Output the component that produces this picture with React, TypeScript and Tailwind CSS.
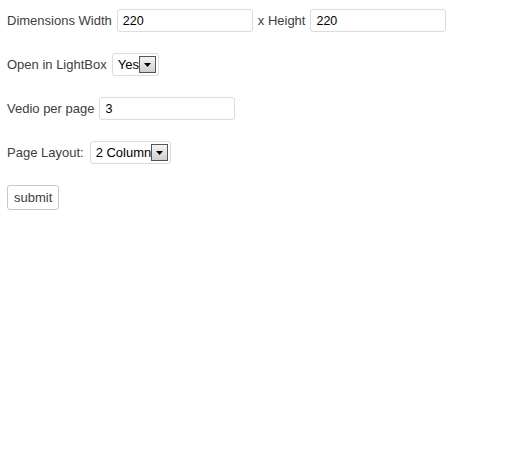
import React from 'react';

const Arrow = () => (
  <span className="flex h-[17px] w-[17px] shrink-0 items-center justify-center border border-[#555] bg-gradient-to-b from-[#f4f4f4] to-[#cfcfcf]">
    <svg width="7" height="4" viewBox="0 0 7 4">
      <path d="M0 0h7L3.5 4z" fill="#000" />
    </svg>
  </span>
);

const FakeSelect = ({ value, width }: { value: string; width: string }) => (
  <div className={`flex h-[23px] ${width} items-center rounded-[3px] border border-[#dcdcdc] bg-white pl-[5px] pr-[3px]`}>
    <span className="whitespace-nowrap text-[13px] leading-none text-black">{value}</span>
    <Arrow />
  </div>
);

const TextInput = ({ value, width = 'w-[136px]' }: { value: string; width?: string }) => (
  <input
    defaultValue={value}
    className={`h-[23px] ${width} rounded-[3px] border border-[#dcdcdc] bg-white px-[5px] text-[12.5px] text-black outline-none`}
  />
);

export default function App() {
  return (
    <div className="min-h-[450px] bg-white pl-[7px] pt-[9px] font-['Liberation_Sans',Arial,sans-serif] text-[13px] text-[#404040]">
      <div className="flex flex-col gap-[21px]">
        <div className="flex items-center">
          <span className="mr-[5px]">Dimensions Width</span>
          <TextInput value="220" />
          <span className="ml-[5px] mr-[5px]">x Height</span>
          <TextInput value="220" />
        </div>
        <div className="flex items-center">
          <span className="mr-[5px]">Open in LightBox</span>
          <FakeSelect value="Yes" width="w-[47px]" />
        </div>
        <div className="flex items-center">
          <span className="mr-[5px]">Vedio per page</span>
          <TextInput value="3" />
        </div>
        <div className="flex items-center">
          <span className="mr-[6px]">Page Layout:</span>
          <FakeSelect value="2 Column" width="w-[81px]" />
        </div>
        <div className="flex">
          <button className="h-[25px] rounded-[3px] border border-[#c8c8c8] bg-white px-[6px] text-[13px] text-[#404040]">
            submit
          </button>
        </div>
      </div>
    </div>
  );
}
